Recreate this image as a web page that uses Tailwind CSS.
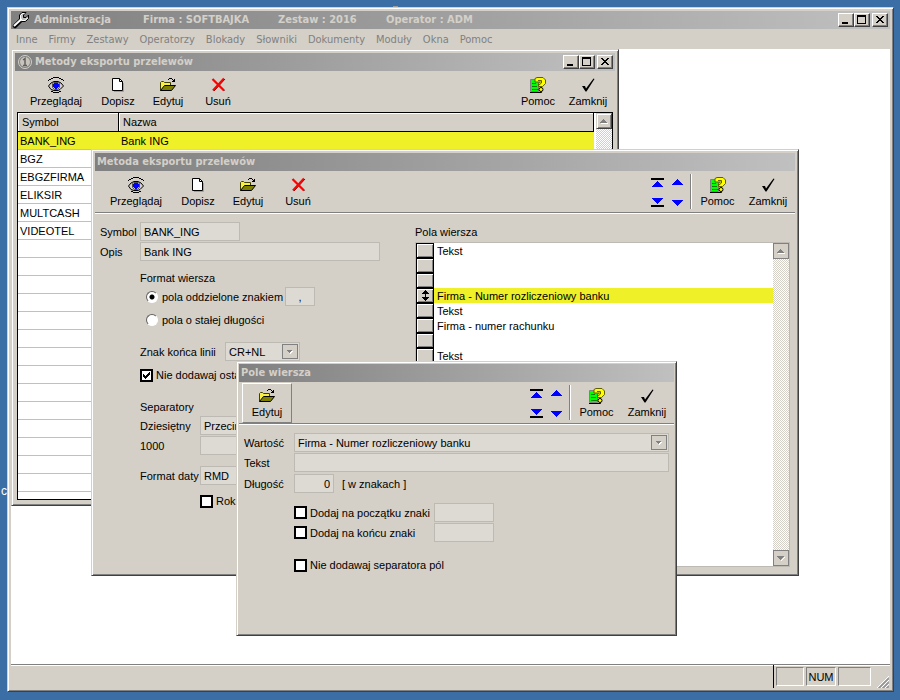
<!DOCTYPE html>
<html lang="pl">
<head>
  <meta charset="UTF-8" />
  <meta name="viewport" content="width=device-width, initial-scale=1.0" />
  <title>Administracja</title>
  <script src="https://cdn.jsdelivr.net/npm/@tailwindcss/browser@4"></script>
</head>
<body class="relative h-screen overflow-hidden bg-[#3a6ea5] pt-[7px] pr-[6px] pb-[8px] pl-[7px] font-['Liberation_Sans',sans-serif] text-[11px] leading-4 text-black">

  <!-- Ikony -->
  <svg class="hidden">
    <symbol id="i-eye" viewBox="0 0 16 16">
      <path d="M0 3.500h1M1 2.500h2M3 1.500h2M5 .5h6M11 1.500h2M13 2.500h2M15 3.500h1" stroke="#000" />
      <path d="M.5 9L3 6L6 4.500H10L13 6L15.500 9L12 12.500L10 13.500H6L3 12.500Z" fill="#d4d0c8" stroke="#000" />
      <path d="M4.500 6.500L6 5.500H10L11.500 6.500V10.500L9.500 12.500H6.500L4.500 10.500Z" fill="#c0c0c0" stroke="#505050" />
      <path d="M6 6h4v1h1v3h-1v1H9v1H7v-1H6v-1H5V7h1z" fill="#00f" />
      <path d="M5 15.500h6M3 14.500h2M11 14.500h2" stroke="#000" />
    </symbol>
    <symbol id="i-doc" viewBox="0 0 16 16">
      <path d="M4 14.500h9.500V6" fill="none" stroke="#a0a0a0" />
      <path d="M2.500 1.500h7l3 3v9h-10z" fill="#fff" stroke="#000" />
      <path d="M9.500 1.500v3h3" fill="none" stroke="#000" />
    </symbol>
    <symbol id="i-folder" viewBox="0 0 16 16">
      <path d="M.5 13.500v-8l1-1h2l1 1h6v3" fill="#f8f040" stroke="#404000" />
      <path d="M.5 13.500L4.500 8.500H15.500L11.500 13.500Z" fill="#808000" stroke="#000" />
      <path d="M8 2.500h1M9 1.500h3M12 2.500h1M13 3.500h1M12 4.500h3M14.500 2v3" stroke="#000" fill="none" />
    </symbol>
    <symbol id="i-delete" viewBox="0 0 16 16">
      <path d="M3.500 3L14.500 14M15 2L4 14" stroke="#400000" />
      <path d="M2.500 2L14 13.500M14 1.500L3 13.500" stroke="#f00" stroke-width="2.200" />
    </symbol>
    <symbol id="i-help" viewBox="0 0 16 16">
      <path d="M0 15.500h11.500V10" fill="none" stroke="#000" />
      <path d="M.5 14.500v-12h8v12z" fill="#0f0" stroke="#808080" />
      <path d="M2 6.500h4M2 9.500h5M2 12.500h6" stroke="#008000" />
      <path d="M5 1.500L7 .5H13L15.500 3V6.500L12.500 9.500H8.500V6.500L10.500 5H5Z" fill="#ff0" stroke="#606000" />
      <path d="M8 3.500h3.500V6L9 8" fill="none" stroke="#606000" />
      <circle cx="11" cy="12.500" r="2" fill="#ff0" stroke="#000" />
    </symbol>
    <symbol id="i-check" viewBox="0 0 16 16">
      <path d="M2 9h3l1 2.500L13.500 1.500L14.500 2L6.500 14.500H5.500z" fill="#000" />
    </symbol>
    <symbol id="i-min" viewBox="0 0 12 10"><path d="M2 7h6v2H2z" /></symbol>
    <symbol id="i-max" viewBox="0 0 12 10"><path d="M1 0h9v9H1zM2 2v6h7V2z" fill-rule="evenodd" /></symbol>
    <symbol id="i-close" viewBox="0 0 12 10"><path d="M2 1h2v1h1v1h2V2h1V1h2v1H9v1H8v1H7v1h1v1h1v1h1v1H8V7H7V6H5v1H4v1H2V7h1V6h1V5h1V4H4V3H3V2H2z" /></symbol>
    <symbol id="i-first" viewBox="0 0 13 10">
      <path d="M0 0h13v2H0z" /><path d="M6 3h1v1h1v1h1v1h1v1h1v1h1v1H1V8h1V7h1V6h1V5h1V4h1z" fill="#00f" />
    </symbol>
    <symbol id="i-last" viewBox="0 0 13 10">
      <path d="M0 8h13v2H0z" /><path d="M1 1h11v1h-1v1h-1v1H9v1H8v1H7v1H6V6H5V5H4V4H3V3H2V2H1z" fill="#00f" />
    </symbol>
    <symbol id="i-prev" viewBox="0 0 13 10"><path d="M6 1h1v1h1v1h1v1h1v1h1v1h1v1H1V6h1V5h1V4h1V3h1V2h1z" fill="#00f" /></symbol>
    <symbol id="i-next" viewBox="0 0 13 10"><path d="M1 3h11v1h-1v1h-1v1H9v1H8v1H7v1H6V8H5V7H4V6H3V5H2V4H1z" fill="#00f" /></symbol>
    <symbol id="i-up" viewBox="0 0 8 5"><path d="M1 5h7V4H1z" fill="#fff" /><path d="M3 0h1v1h1v1h1v1h1v1H0V3h1V2h1V1h1z" fill="#808080" /></symbol>
    <symbol id="i-down" viewBox="0 0 8 5"><path d="M8 1h-1v1h-1v1h-1v1h-1v1h1V4h1V3h1V2h1z" fill="#fff" /><path d="M0 0h7v1H6v1H5v1H4v1H3V3H2V2H1V1H0z" fill="#808080" /></symbol>
    <symbol id="i-drop" viewBox="0 0 6 4"><path d="M1 1h5v1H5v1H4v1H3z" fill="#fff" /><path d="M0 0h5v1H4v1H3v1H2V2H1V1H0z" fill="#808080" /></symbol>
  </svg>

  <!-- Pulpit pod oknem -->
  <span class="absolute top-[483px] left-[1px] text-xs text-white">c</span>
  <span class="absolute top-[6px] left-[393px] h-px w-[5px] bg-[#a09a90]"></span>

  <!-- Okno główne -->
  <div class="relative flex h-full flex-col border border-t-[#d4d0c8] border-r-[#404040] border-b-[#404040] border-l-[#d4d0c8] bg-[#d4d0c8] p-[3px] shadow-[inset_1px_1px_#fff,inset_-1px_-1px_#808080]">
    <header class="flex h-[18px] shrink-0 items-center bg-linear-to-r from-[#808080] to-[#c0c0c0] pr-[2px] pl-[1px] font-['DejaVu_Sans_Condensed','DejaVu_Sans',sans-serif] font-bold text-[#d4d0c8]">
      <svg class="mr-[4px] h-[18px] w-[18px]" viewBox="0 0 18 18">
        <path d="M3 15L8.500 9.500" stroke="#000" stroke-width="4.500" stroke-linecap="round" />
        <path d="M10 1.500H14L11.500 4V6.500H14L16.500 4V7.500L13.500 10.500H9.500L7.500 8.500V4Z" fill="#c0c0c0" stroke="#000" />
        <path d="M2.500 14.500L9 8.500" stroke="#fff" stroke-width="2" stroke-linecap="round" />
        <path d="M12.500 2.500H10.500L8.500 4.500V8L10 9.500H13L15.500 7" fill="none" stroke="#fff" />
      </svg>
      <h1 class="w-[109px]">Administracja</h1>
      <span class="w-[135px]">Firma : SOFTBAJKA</span>
      <span class="w-[108px]">Zestaw : 2016</span>
      <span class="flex-1">Operator : ADM</span>
      <button type="button" aria-label="Minimalizuj" class="flex h-[14px] w-[16px] items-center justify-center border border-t-white border-r-[#404040] border-b-[#404040] border-l-white bg-[#d4d0c8] shadow-[inset_-1px_-1px_#808080]"><svg class="h-[10px] w-[12px] shrink-0"><use href="#i-min" /></svg></button>
      <button type="button" aria-label="Maksymalizuj" class="flex h-[14px] w-[16px] items-center justify-center border border-t-white border-r-[#404040] border-b-[#404040] border-l-white bg-[#d4d0c8] shadow-[inset_-1px_-1px_#808080]"><svg class="h-[10px] w-[12px] shrink-0"><use href="#i-max" /></svg></button>
      <button type="button" aria-label="Zamknij" class="ml-[2px] flex h-[14px] w-[16px] items-center justify-center border border-t-white border-r-[#404040] border-b-[#404040] border-l-white bg-[#d4d0c8] shadow-[inset_-1px_-1px_#808080]"><svg class="h-[10px] w-[12px] shrink-0"><use href="#i-close" /></svg></button>
    </header>

    <nav class="flex h-5 shrink-0 items-center gap-[11px] pt-[2px] pl-[5px] font-['DejaVu_Sans_Condensed','DejaVu_Sans',sans-serif] text-[#808080]">
      <a href="#">Inne</a>
      <a href="#">Firmy</a>
      <a href="#">Zestawy</a>
      <a href="#">Operatorzy</a>
      <a href="#">Blokady</a>
      <a href="#">Słowniki</a>
      <a href="#">Dokumenty</a>
      <a href="#">Moduły</a>
      <a href="#">Okna</a>
      <a href="#">Pomoc</a>
    </nav>

    <main class="relative flex-1 overflow-hidden bg-white">

      <!-- Metody eksportu przelewów -->
      <section class="absolute top-0 left-0 flex h-[457px] w-[608px] flex-col border border-t-[#d4d0c8] border-r-[#404040] border-b-[#404040] border-l-[#d4d0c8] bg-[#d4d0c8] p-[3px] shadow-[inset_1px_1px_#fff,inset_-1px_-1px_#808080]">
        <header class="flex h-[18px] shrink-0 items-center bg-linear-to-r from-[#808080] to-[#c0c0c0] pr-[2px] pl-[2px] font-['DejaVu_Sans_Condensed','DejaVu_Sans',sans-serif] font-bold text-[#d4d0c8]">
          <svg class="mr-[2px] h-4 w-4" viewBox="0 0 16 16">
            <circle cx="8" cy="8" r="6.500" fill="none" stroke="#d4d0c8" />
            <circle cx="8" cy="8" r="5" fill="#c8c4bc" />
            <path d="M6 6L8 4.500V11.500M6 11.500h4" fill="none" stroke="#606060" stroke-width="1.500" />
          </svg>
          <h2 class="flex-1">Metody eksportu przelewów</h2>
          <button type="button" aria-label="Minimalizuj" class="flex h-[14px] w-[16px] items-center justify-center border border-t-white border-r-[#404040] border-b-[#404040] border-l-white bg-[#d4d0c8] shadow-[inset_-1px_-1px_#808080]"><svg class="h-[10px] w-[12px] shrink-0"><use href="#i-min" /></svg></button>
          <button type="button" aria-label="Maksymalizuj" class="flex h-[14px] w-[16px] items-center justify-center border border-t-white border-r-[#404040] border-b-[#404040] border-l-white bg-[#d4d0c8] shadow-[inset_-1px_-1px_#808080]"><svg class="h-[10px] w-[12px] shrink-0"><use href="#i-max" /></svg></button>
          <button type="button" aria-label="Zamknij" class="ml-[2px] flex h-[14px] w-[16px] items-center justify-center border border-t-white border-r-[#404040] border-b-[#404040] border-l-white bg-[#d4d0c8] shadow-[inset_-1px_-1px_#808080]"><svg class="h-[10px] w-[12px] shrink-0"><use href="#i-close" /></svg></button>
        </header>

        <div class="flex h-[41px] shrink-0 pr-[2px] pl-[4px]">
          <button type="button" class="flex w-[74px] flex-col items-center pt-[6px]"><svg class="h-4 w-4"><use href="#i-eye" /></svg>Przeglądaj</button>
          <button type="button" class="flex w-[50px] flex-col items-center pt-[6px]"><svg class="h-4 w-4"><use href="#i-doc" /></svg>Dopisz</button>
          <button type="button" class="flex w-[50px] flex-col items-center pt-[6px]"><svg class="h-4 w-4"><use href="#i-folder" /></svg>Edytuj</button>
          <button type="button" class="flex w-[50px] flex-col items-center pt-[6px]"><svg class="h-4 w-4"><use href="#i-delete" /></svg>Usuń</button>
          <button type="button" class="ml-auto flex w-[50px] flex-col items-center pt-[6px]"><svg class="h-4 w-4"><use href="#i-help" /></svg>Pomoc</button>
          <button type="button" class="flex w-[50px] flex-col items-center pt-[6px]"><svg class="h-4 w-4"><use href="#i-check" /></svg>Zamknij</button>
        </div>

        <div class="mx-[2px] mb-[2px] flex min-h-0 flex-1 gap-[2px] overflow-hidden border border-black bg-white">
          <table class="flex-1 table-fixed border-separate border-spacing-0 self-start text-left">
            <colgroup><col class="w-[101px]" /><col /></colgroup>
            <thead class="bg-[#d4d0c8]">
              <tr class="h-[19px]">
                <th class="border-r border-b border-black p-0 pl-[4px] font-normal shadow-[inset_1px_1px_#fff]">Symbol</th>
                <th class="border-r border-b border-black p-0 pl-[4px] font-normal shadow-[inset_1px_1px_#fff]">Nazwa</th>
              </tr>
            </thead>
            <tbody>
              <tr class="h-[18px] bg-[#f0f028]"><td class="border-b border-[#c0c0c0] p-0 pl-[2px]">BANK_ING</td><td class="border-b border-[#c0c0c0] p-0 pl-[2px]">Bank ING</td></tr>
              <tr class="h-[18px]"><td class="border-b border-[#c0c0c0] p-0 pl-[2px]">BGZ</td><td class="border-b border-[#c0c0c0] p-0"></td></tr>
              <tr class="h-[18px]"><td class="border-b border-[#c0c0c0] p-0 pl-[2px]">EBGZFIRMA</td><td class="border-b border-[#c0c0c0] p-0"></td></tr>
              <tr class="h-[18px]"><td class="border-b border-[#c0c0c0] p-0 pl-[2px]">ELIKSIR</td><td class="border-b border-[#c0c0c0] p-0"></td></tr>
              <tr class="h-[18px]"><td class="border-b border-[#c0c0c0] p-0 pl-[2px]">MULTCASH</td><td class="border-b border-[#c0c0c0] p-0"></td></tr>
              <tr class="h-[18px]"><td class="border-b border-[#c0c0c0] p-0 pl-[2px]">VIDEOTEL</td><td class="border-b border-[#c0c0c0] p-0"></td></tr>
              <tr class="h-[18px]"><td colspan="2" class="border-b border-[#c0c0c0] p-0"></td></tr>
              <tr class="h-[18px]"><td colspan="2" class="border-b border-[#c0c0c0] p-0"></td></tr>
              <tr class="h-[18px]"><td colspan="2" class="border-b border-[#c0c0c0] p-0"></td></tr>
              <tr class="h-[18px]"><td colspan="2" class="border-b border-[#c0c0c0] p-0"></td></tr>
              <tr class="h-[18px]"><td colspan="2" class="border-b border-[#c0c0c0] p-0"></td></tr>
              <tr class="h-[18px]"><td colspan="2" class="border-b border-[#c0c0c0] p-0"></td></tr>
              <tr class="h-[18px]"><td colspan="2" class="border-b border-[#c0c0c0] p-0"></td></tr>
              <tr class="h-[18px]"><td colspan="2" class="border-b border-[#c0c0c0] p-0"></td></tr>
              <tr class="h-[18px]"><td colspan="2" class="border-b border-[#c0c0c0] p-0"></td></tr>
              <tr class="h-[18px]"><td colspan="2" class="border-b border-[#c0c0c0] p-0"></td></tr>
              <tr class="h-[18px]"><td colspan="2" class="border-b border-[#c0c0c0] p-0"></td></tr>
              <tr class="h-[18px]"><td colspan="2" class="border-b border-[#c0c0c0] p-0"></td></tr>
              <tr class="h-[18px]"><td colspan="2" class="border-b border-[#c0c0c0] p-0"></td></tr>
              <tr class="h-[18px]"><td colspan="2" class="border-b border-[#c0c0c0] p-0"></td></tr>
            </tbody>
          </table>
          <div class="w-4 bg-[conic-gradient(#fff_25%,#d4d0c8_0_50%,#fff_0_75%,#d4d0c8_0)] bg-[length:2px_2px]">
            <button type="button" aria-label="Przewiń w górę" class="flex h-4 w-4 items-center justify-center border border-t-[#d4d0c8] border-r-[#404040] border-b-[#404040] border-l-[#d4d0c8] bg-[#d4d0c8] shadow-[inset_1px_1px_#fff,inset_-1px_-1px_#808080]"><svg class="h-[5px] w-[8px] shrink-0"><use href="#i-up" /></svg></button>
          </div>
        </div>
      </section>

      <!-- Metoda eksportu przelewów -->
      <section class="absolute top-[100px] left-[80px] flex h-[427px] w-[708px] flex-col border border-t-[#d4d0c8] border-r-[#404040] border-b-[#404040] border-l-[#d4d0c8] bg-[#d4d0c8] p-[3px] shadow-[inset_1px_1px_#fff,inset_-1px_-1px_#808080]">
        <header class="flex h-[18px] shrink-0 items-center bg-linear-to-r from-[#808080] to-[#c0c0c0] pl-[2px] font-['DejaVu_Sans_Condensed','DejaVu_Sans',sans-serif] font-bold text-[#d4d0c8]">
          <h2>Metoda eksportu przelewów</h2>
        </header>

        <div class="flex h-[42px] shrink-0 border-b border-[#808080] pr-[2px] pl-[4px] shadow-[0_1px_#fff]">
          <button type="button" class="flex w-[74px] flex-col items-center pt-[6px]"><svg class="h-4 w-4"><use href="#i-eye" /></svg>Przeglądaj</button>
          <button type="button" class="flex w-[50px] flex-col items-center pt-[6px]"><svg class="h-4 w-4"><use href="#i-doc" /></svg>Dopisz</button>
          <button type="button" class="flex w-[50px] flex-col items-center pt-[6px]"><svg class="h-4 w-4"><use href="#i-folder" /></svg>Edytuj</button>
          <button type="button" class="flex w-[50px] flex-col items-center pt-[6px]"><svg class="h-4 w-4"><use href="#i-delete" /></svg>Usuń</button>
          <div class="mr-[6px] ml-auto grid grid-cols-2 content-between gap-x-[7px] pt-[7px] pb-[5px]">
            <button type="button" aria-label="Pierwszy"><svg class="h-[10px] w-[13px]"><use href="#i-first" /></svg></button>
            <button type="button" aria-label="Poprzedni"><svg class="h-[10px] w-[13px]"><use href="#i-prev" /></svg></button>
            <button type="button" aria-label="Ostatni"><svg class="h-[10px] w-[13px]"><use href="#i-last" /></svg></button>
            <button type="button" aria-label="Następny"><svg class="h-[10px] w-[13px]"><use href="#i-next" /></svg></button>
          </div>
          <div class="my-[3px] w-[2px] border-r border-l border-r-white border-l-[#808080]"></div>
          <button type="button" class="flex w-[51px] flex-col items-center pt-[6px]"><svg class="h-4 w-4"><use href="#i-help" /></svg>Pomoc</button>
          <button type="button" class="flex w-[50px] flex-col items-center pt-[6px]"><svg class="h-4 w-4"><use href="#i-check" /></svg>Zamknij</button>
        </div>

        <div class="flex min-h-0 flex-1 pt-[9px] pr-[5px] pb-[5px] pl-[5px]">
          <form class="w-[315px] shrink-0">
            <div class="flex h-5 items-center">
              <label for="symbol" class="w-10">Symbol</label>
              <input id="symbol" type="text" value="BANK_ING" readonly class="mb-px h-[19px] w-[100px] border border-[#bdb9b3] bg-[#ddd9d3] px-[3px]" />
            </div>
            <div class="flex h-5 items-center">
              <label for="opis" class="w-10">Opis</label>
              <input id="opis" type="text" value="Bank ING" readonly class="mb-px h-[19px] w-[240px] border border-[#bdb9b3] bg-[#ddd9d3] px-[3px]" />
            </div>

            <div class="ml-10">
              <p class="mt-2 h-[17px]">Format wiersza</p>
              <div class="flex h-5 items-center pl-[6px]">
                <label class="flex w-[139px] items-center gap-1">
                  <input type="radio" name="format" checked class="h-3 w-3 appearance-none rounded-full border border-t-[#606060] border-r-white border-b-white border-l-[#606060] bg-white checked:bg-[radial-gradient(circle,#000_2px,#fff_3px)]" />
                  pola oddzielone znakiem
                </label>
                <input type="text" aria-label="Znak oddzielający" value="," readonly class="mb-px h-[19px] w-[30px] border border-[#bdb9b3] bg-[#ddd9d3] text-center" />
              </div>
              <div class="mt-[3px] flex h-5 items-center pl-[6px]">
                <label class="flex items-center gap-1">
                  <input type="radio" name="format" class="h-3 w-3 appearance-none rounded-full border border-t-[#606060] border-r-white border-b-white border-l-[#606060] bg-white checked:bg-[radial-gradient(circle,#000_2px,#fff_3px)]" />
                  pola o stałej długości
                </label>
              </div>
              <div class="mt-3 flex h-5 items-center">
                <label for="koniec" class="w-[85px]">Znak końca linii</label>
                <div class="relative mb-px h-[19px] w-[75px]">
                  <select id="koniec" class="h-[19px] w-full appearance-none border border-[#bdb9b3] bg-[#ddd9d3] px-[3px]"><option>CR+NL</option></select>
                  <span class="pointer-events-none absolute top-[2px] right-[2px] flex h-[15px] w-4 items-center justify-center border border-[#808080] bg-[#d4d0c8]"><svg class="h-[4px] w-[6px]"><use href="#i-drop" /></svg></span>
                </div>
              </div>
              <label class="relative mt-[3px] flex h-5 items-center gap-[3px] whitespace-nowrap">
                <input type="checkbox" checked class="h-[13px] w-[13px] appearance-none border-2 border-black bg-white" />
                <svg class="pointer-events-none absolute left-[3px] h-[7px] w-[7px]" viewBox="0 0 7 7"><path d="M0 2h1v1h1v1h1V3h1V2h1V1h1V0h1v3H6v1H5v1H4v1H3v1H2V6H1V5H0z" /></svg>
                Nie dodawaj ostatniego
              </label>

              <p class="mt-3 flex h-[19px] items-center">Separatory</p>
              <div class="flex h-5 items-center">
                <label for="dziesietny" class="w-[60px]">Dziesiętny</label>
                <select id="dziesietny" class="mb-px h-[19px] w-[100px] appearance-none border border-[#bdb9b3] bg-[#ddd9d3] px-[3px]"><option>Przecinek</option></select>
              </div>
              <div class="flex h-5 items-center">
                <label for="tysiace" class="w-[60px]">1000</label>
                <select id="tysiace" class="mb-px h-[19px] w-[100px] appearance-none border border-[#bdb9b3] bg-[#ddd9d3] px-[3px]"><option></option></select>
              </div>
              <div class="mt-[10px] flex h-5 items-center">
                <label for="data" class="w-[60px]">Format daty</label>
                <select id="data" class="mb-px h-[19px] w-[100px] appearance-none border border-[#bdb9b3] bg-[#ddd9d3] px-[3px]"><option>RMD</option></select>
              </div>
              <label class="mt-[5px] ml-[60px] flex h-5 items-center gap-[3px]">
                <input type="checkbox" class="h-[13px] w-[13px] appearance-none border-2 border-black bg-white" />
                Rok
              </label>
            </div>
          </form>

          <div class="flex min-w-0 flex-1 flex-col">
            <h3 class="flex h-5 items-center">Pola wiersza</h3>
            <div class="flex min-h-0 flex-1 border border-[#bdb9b3] bg-white">
              <table class="flex-1 table-fixed border-separate border-spacing-0 self-start leading-[14px]">
                <colgroup><col class="w-[18px]" /><col /></colgroup>
                <tbody>
                  <tr class="h-[15px]"><td class="border border-black bg-[#d4d0c8] p-0 shadow-[inset_1px_1px_#fff,inset_-1px_-1px_#808080]"></td><td class="p-0 pl-[3px]">Tekst</td></tr>
                  <tr class="h-[15px]"><td class="border border-black bg-[#d4d0c8] p-0 shadow-[inset_1px_1px_#fff,inset_-1px_-1px_#808080]"></td><td class="p-0"></td></tr>
                  <tr class="h-[15px]"><td class="border border-black bg-[#d4d0c8] p-0 shadow-[inset_1px_1px_#fff,inset_-1px_-1px_#808080]"></td><td class="p-0"></td></tr>
                  <tr class="h-[15px] bg-[#f0f028]">
                    <td class="border border-black bg-[#d4d0c8] p-0 shadow-[inset_1px_1px_#fff,inset_-1px_-1px_#808080]"><svg class="mx-auto h-[11px] w-[7px]" viewBox="0 0 7 11"><path d="M3 0h1v1h1v1h1v1h1v1H4v3h3v1H6v1H5v1H4v1H3v-1H2V9H1V8H0V7h3V4H0V3h1V2h1V1h1z" /></svg></td>
                    <td class="p-0 pl-[3px]">Firma - Numer rozliczeniowy banku</td>
                  </tr>
                  <tr class="h-[15px]"><td class="border border-black bg-[#d4d0c8] p-0 shadow-[inset_1px_1px_#fff,inset_-1px_-1px_#808080]"></td><td class="p-0 pl-[3px]">Tekst</td></tr>
                  <tr class="h-[15px]"><td class="border border-black bg-[#d4d0c8] p-0 shadow-[inset_1px_1px_#fff,inset_-1px_-1px_#808080]"></td><td class="p-0 pl-[3px]">Firma - numer rachunku</td></tr>
                  <tr class="h-[15px]"><td class="border border-black bg-[#d4d0c8] p-0 shadow-[inset_1px_1px_#fff,inset_-1px_-1px_#808080]"></td><td class="p-0"></td></tr>
                  <tr class="h-[15px]"><td class="border border-black bg-[#d4d0c8] p-0 shadow-[inset_1px_1px_#fff,inset_-1px_-1px_#808080]"></td><td class="p-0 pl-[3px]">Tekst</td></tr>
                </tbody>
              </table>
              <div class="flex w-4 flex-col justify-between bg-[conic-gradient(#fff_25%,#d4d0c8_0_50%,#fff_0_75%,#d4d0c8_0)] bg-[length:2px_2px]">
                <button type="button" aria-label="Przewiń w górę" class="flex h-4 w-4 items-center justify-center border border-[#808080] bg-[#d4d0c8]"><svg class="h-[5px] w-[8px] shrink-0"><use href="#i-up" /></svg></button>
                <button type="button" aria-label="Przewiń w dół" class="flex h-4 w-4 items-center justify-center border border-[#808080] bg-[#d4d0c8]"><svg class="h-[5px] w-[8px] shrink-0"><use href="#i-down" /></svg></button>
              </div>
            </div>
          </div>
        </div>
      </section>

      <!-- Pole wiersza -->
      <section class="absolute top-[312px] left-[225px] flex h-[275px] w-[441px] flex-col border border-t-[#d4d0c8] border-r-[#404040] border-b-[#404040] border-l-[#d4d0c8] bg-[#d4d0c8] p-[2px] shadow-[inset_1px_1px_#fff,inset_-1px_-1px_#808080]">
        <header class="flex h-[18px] shrink-0 items-center bg-linear-to-r from-[#808080] to-[#c0c0c0] pl-[2px] font-['DejaVu_Sans_Condensed','DejaVu_Sans',sans-serif] font-bold text-[#d4d0c8]">
          <h2>Pole wiersza</h2>
        </header>

        <div class="flex h-[42px] shrink-0 border-b border-[#808080] pr-[2px] pl-[3px] shadow-[0_1px_#fff]">
          <button type="button" class="mt-px flex w-[50px] flex-col items-center border border-t-white border-r-[#808080] border-b-[#808080] border-l-white pt-[4px]"><svg class="h-4 w-4 shrink-0"><use href="#i-folder" /></svg>Edytuj</button>
          <div class="mr-[6px] ml-auto grid grid-cols-2 content-between gap-x-[7px] pt-[7px] pb-[5px]">
            <button type="button" aria-label="Pierwszy"><svg class="h-[10px] w-[13px]"><use href="#i-first" /></svg></button>
            <button type="button" aria-label="Poprzedni"><svg class="h-[10px] w-[13px]"><use href="#i-prev" /></svg></button>
            <button type="button" aria-label="Ostatni"><svg class="h-[10px] w-[13px]"><use href="#i-last" /></svg></button>
            <button type="button" aria-label="Następny"><svg class="h-[10px] w-[13px]"><use href="#i-next" /></svg></button>
          </div>
          <div class="my-[3px] w-[2px] border-r border-l border-r-white border-l-[#808080]"></div>
          <button type="button" class="flex w-[51px] flex-col items-center pt-[6px]"><svg class="h-4 w-4"><use href="#i-help" /></svg>Pomoc</button>
          <button type="button" class="flex w-[50px] flex-col items-center pt-[6px]"><svg class="h-4 w-4"><use href="#i-check" /></svg>Zamknij</button>
        </div>

        <form class="px-[5px] pt-[9px]">
          <div class="flex h-5 items-center">
            <label for="wartosc" class="w-[50px]">Wartość</label>
            <div class="relative mb-px h-[19px] flex-1">
              <select id="wartosc" class="h-[19px] w-full appearance-none border border-[#bdb9b3] bg-[#ddd9d3] px-[3px]"><option>Firma - Numer rozliczeniowy banku</option></select>
              <span class="pointer-events-none absolute top-[2px] right-[2px] flex h-[15px] w-4 items-center justify-center border border-[#808080] bg-[#d4d0c8]"><svg class="h-[4px] w-[6px]"><use href="#i-drop" /></svg></span>
            </div>
          </div>
          <div class="flex h-5 items-center">
            <label for="tekst" class="w-[50px]">Tekst</label>
            <input id="tekst" type="text" readonly class="mb-px h-[19px] flex-1 border border-[#bdb9b3] bg-[#ddd9d3] px-[3px]" />
          </div>
          <div class="mt-px flex h-5 items-center">
            <label for="dlugosc" class="w-[50px]">Długość</label>
            <input id="dlugosc" type="text" value="0" readonly class="mb-px h-[19px] w-10 border border-[#bdb9b3] bg-[#ddd9d3] px-[3px] text-right" />
            <span class="pl-2">[ w znakach ]</span>
          </div>
          <div class="mt-[9px] ml-[50px] flex h-5 items-center">
            <label class="mb-px flex w-[140px] items-center gap-[3px]">
              <input type="checkbox" class="h-[13px] w-[13px] appearance-none border-2 border-black bg-white" />
              Dodaj na początku znaki
            </label>
            <input type="text" aria-label="Znaki na początku" readonly class="mb-px h-[19px] w-[60px] border border-[#bdb9b3] bg-[#ddd9d3] px-[3px]" />
          </div>
          <div class="ml-[50px] flex h-5 items-center">
            <label class="mb-px flex w-[140px] items-center gap-[3px]">
              <input type="checkbox" class="h-[13px] w-[13px] appearance-none border-2 border-black bg-white" />
              Dodaj na końcu znaki
            </label>
            <input type="text" aria-label="Znaki na końcu" readonly class="mb-px h-[19px] w-[60px] border border-[#bdb9b3] bg-[#ddd9d3] px-[3px]" />
          </div>
          <label class="mt-3 ml-[50px] flex h-5 items-center gap-[3px]">
            <input type="checkbox" class="h-[13px] w-[13px] appearance-none border-2 border-black bg-white" />
            Nie dodawaj separatora pól
          </label>
        </form>
      </section>
    </main>

    <!-- Pasek stanu -->
    <footer class="flex h-6 shrink-0 items-stretch justify-end border-t border-[#808080] shadow-[inset_0_1px_#fff]">
      <div class="mr-[2px] w-px bg-black"></div>
      <div class="my-[2px] mr-[2px] w-7 border border-t-[#808080] border-r-white border-b-white border-l-[#808080]"></div>
      <div class="my-[2px] mr-[2px] flex w-[30px] items-center justify-center border border-t-[#808080] border-r-white border-b-white border-l-[#808080]">NUM</div>
      <div class="my-[2px] mr-[6px] w-[33px] border border-t-[#808080] border-r-white border-b-white border-l-[#808080]"></div>
      <svg class="mr-[1px] h-3 w-3 self-end" viewBox="0 0 12 12">
        <path d="M0 12L12 0M4 12L12 4M8 12L12 8" stroke="#fff" />
        <path d="M1.500 12L12 1.500M2.500 12L12 2.500M5.500 12L12 5.500M6.500 12L12 6.500M9.500 12L12 9.500M10.500 12L12 10.500" stroke="#808080" />
      </svg>
    </footer>
  </div>
</body>
</html>
